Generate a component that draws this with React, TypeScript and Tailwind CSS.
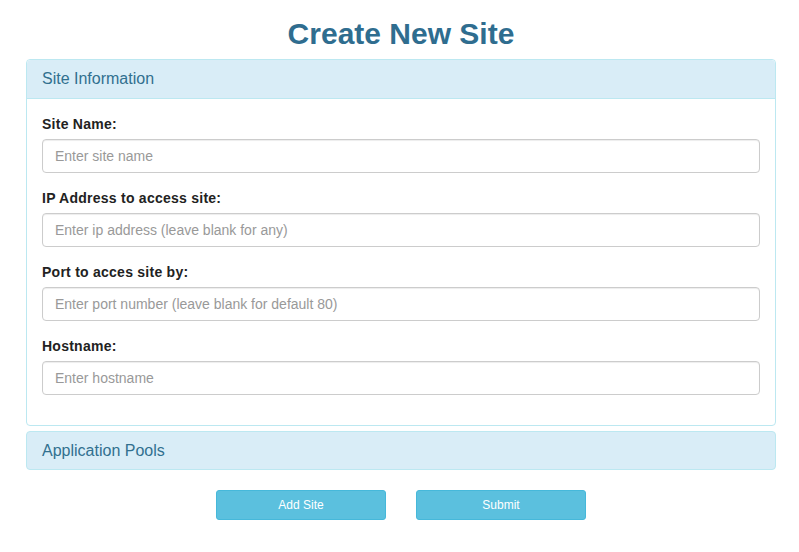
const fields = [
  { label: "Site Name:", placeholder: "Enter site name" },
  { label: "IP Address to access site:", placeholder: "Enter ip address (leave blank for any)" },
  { label: "Port to acces site by:", placeholder: "Enter port number (leave blank for default 80)" },
  { label: "Hostname:", placeholder: "Enter hostname" },
];

const App = () => {
  return (
    <div className="min-h-screen bg-white font-['Liberation_Sans',Arial,sans-serif] text-[14px] text-[#333]">
      <div className="ml-[26px] w-[750px]">
        <h1 className="mt-[17px] mb-[9px] text-center text-[30px] font-bold leading-[33px] text-[#2f6d8f]">
          Create New Site
        </h1>

        <div className="rounded border border-[#bce8f1] bg-white">
          <div className="rounded-t border-b border-[#bce8f1] bg-[#d9edf7] px-[15px] py-[10px] text-[16px] leading-[18px] text-[#31708f]">
            Site Information
          </div>
          <div className="p-[15px]">
            {fields.map((f) => (
              <div key={f.label} className="mb-[15px]">
                <label className="mb-[5px] block font-bold leading-[20px] tracking-[0.25px] text-[#222]">
                  {f.label}
                </label>
                <input
                  type="text"
                  placeholder={f.placeholder}
                  className="block h-[34px] w-full rounded border border-[#ccc] px-[12px] text-[14px] text-[#555] shadow-[inset_0_1px_1px_rgba(0,0,0,0.075)] outline-none placeholder:text-[#999]"
                />
              </div>
            ))}
          </div>
        </div>

        <div className="mt-[5px] rounded border border-[#bce8f1] bg-[#d9edf7] px-[15px] py-[9px] text-[16px] leading-[19px] text-[#31708f]">
          Application Pools
        </div>

        <div className="mt-[20px] flex justify-center gap-[30px]">
          <button className="h-[30px] w-[170px] rounded-[3px] border border-[#46b8da] bg-[#5bc0de] text-[12px] text-white">
            Add Site
          </button>
          <button className="h-[30px] w-[170px] rounded-[3px] border border-[#46b8da] bg-[#5bc0de] text-[12px] text-white">
            Submit
          </button>
        </div>
      </div>
    </div>
  );
};

export default App;
